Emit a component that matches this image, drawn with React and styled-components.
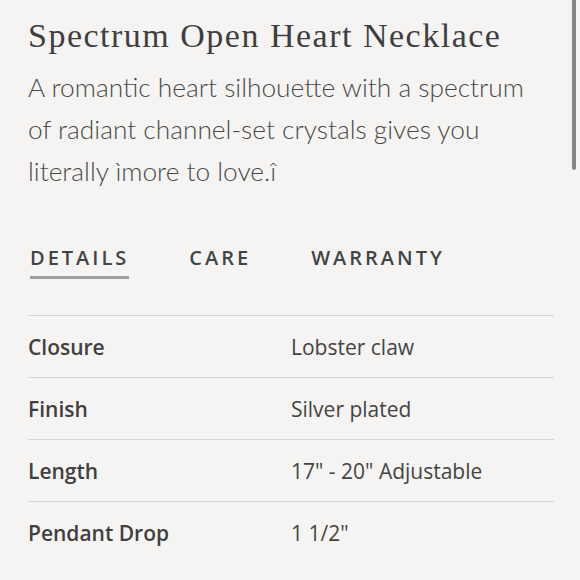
import React from 'react'
import styled, { createGlobalStyle } from 'styled-components'

const Global = createGlobalStyle`
  html, body {
    margin: 0;
    padding: 0;
    background: #f5f4f2;
  }
  body {
    overflow: hidden;
  }
`

const Page = styled.div`
  position: relative;
  width: 580px;
  height: 580px;
  box-sizing: border-box;
  padding: 14px 27px 0 28px;
  background: #f5f4f2;
  color: #3d3d3d;
  overflow: hidden;
`

const Title = styled.h1`
  margin: 0;
  font-family: "Liberation Serif", "DejaVu Serif", serif;
  font-weight: 400;
  font-size: 34px;
  line-height: 44px;
  letter-spacing: 1.5px;
  color: #3f3e3e;
  white-space: nowrap;
`

const Description = styled.p`
  margin: 8px 0 0;
  font-family: Lato, "Open Sans", sans-serif;
  font-weight: 300;
  font-size: 26.3px;
  line-height: 42px;
  color: #4a4949;
  white-space: nowrap;
`

const Tabs = styled.div`
  display: flex;
  gap: 60px;
  margin-top: 52px;
  padding-left: 2px;
`

const Tab = styled.div`
  font-family: "Open Sans", sans-serif;
  font-weight: 600;
  font-size: 20px;
  letter-spacing: 3px;
  color: #444;
  padding-bottom: 5px;
  border-bottom: 3px solid ${p => (p.$active ? '#a09f9e' : 'transparent')};
`

const Table = styled.div`
  margin-top: 36px;
  width: 526px;
  border-top: 1px solid #d8d7d5;
`

const Row = styled.div`
  display: grid;
  grid-template-columns: 263px 1fr;
  align-items: center;
  height: 61px;
  border-bottom: ${p => (p.$last ? 'none' : '1px solid #d8d7d5')};
  font-family: "Open Sans", sans-serif;
  font-size: 21px;
`

const Label = styled.div`
  font-weight: 600;
  color: #404040;
`

const Value = styled.div`
  font-weight: 400;
  color: #444;
`

const Scrollbar = styled.div`
  position: absolute;
  top: 0;
  right: 4px;
  width: 4px;
  height: 170px;
  border-radius: 0 0 2px 2px;
  background: #858585;
`

const details = [
  ['Closure', 'Lobster claw'],
  ['Finish', 'Silver plated'],
  ['Length', '17" - 20" Adjustable'],
  ['Pendant Drop', '1 1/2"'],
]

const App = () => {
  return (
    <>
      <Global />
      <Page>
        <Title>Spectrum Open Heart Necklace</Title>
        <Description>
          A romantic heart silhouette with a spectrum<br />
          of radiant channel-set crystals gives you<br />
          literally ìmore to love.î
        </Description>
        <Tabs>
          <Tab $active>DETAILS</Tab>
          <Tab>CARE</Tab>
          <Tab>WARRANTY</Tab>
        </Tabs>
        <Table>
          {details.map(([label, value], i) => (
            <Row key={label} $last={i === details.length - 1}>
              <Label>{label}</Label>
              <Value>{value}</Value>
            </Row>
          ))}
        </Table>
        <Scrollbar />
      </Page>
    </>
  )
}

export default App
